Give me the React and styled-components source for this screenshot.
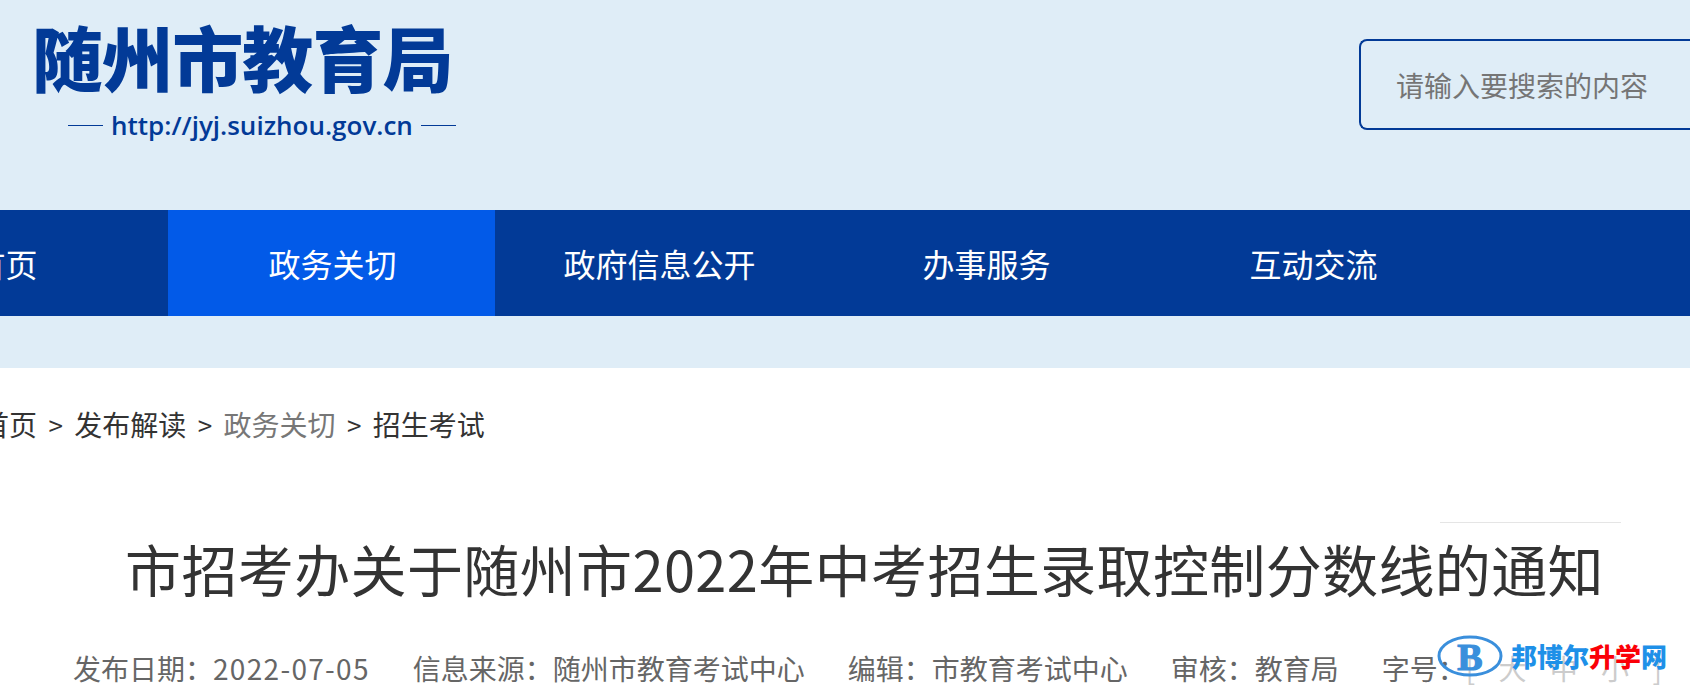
import styled, { createGlobalStyle } from "styled-components";

const GlobalStyle = createGlobalStyle`
  html, body {
    margin: 0;
    padding: 0;
    height: 698px;
    overflow: hidden;
    background: #fff;
  }
  * { box-sizing: border-box; }
`;

const CJK = `"Noto Sans CJK SC", "Noto Sans", sans-serif`;

const Page = styled.div`
  position: relative;
  width: 1690px;
  height: 698px;
  overflow: hidden;
  font-family: ${CJK};
`;

const HeaderBand = styled.header`
  height: 368px;
  background: #dfedf7;
`;

const TopRow = styled.div`
  height: 210px;
  display: flex;
  justify-content: space-between;
  align-items: flex-start;
`;

const Logo = styled.div`
  padding: 9px 0 0 32px;
  display: flex;
  flex-direction: column;
`;

const LogoTitle = styled.div`
  font-size: 71px;
  line-height: 92px;
  font-weight: 900;
  color: #023a97;
  letter-spacing: -0.9px;
  white-space: nowrap;
`;

const LogoUrl = styled.div`
  display: flex;
  align-items: center;
  gap: 8px;
  margin: 8px 0 0 36px;
  font-family: "Open Sans", sans-serif;
  font-size: 26px;
  line-height: 32px;
  font-weight: 600;
  color: #023a97;
  &::before, &::after {
    content: "";
    width: 35px;
    height: 1px;
    background: #023a97;
  }
`;

const SearchBox = styled.div`
  width: 331px;
  height: 91px;
  margin-top: 39px;
  padding-left: 35px;
  display: flex;
  align-items: center;
  flex-shrink: 0;
  border: 2px solid #023a97;
  border-right: none;
  border-radius: 8px 0 0 8px;
  font-size: 28px;
  color: #757575;
`;

const Nav = styled.nav`
  height: 106px;
  background: #023a97;
  display: flex;
  margin-left: -159px;
`;

const NavItem = styled.a`
  flex: 0 0 327px;
  display: flex;
  align-items: center;
  justify-content: center;
  padding-left: 2px;
  font-size: 32px;
  color: #fff;
  background: ${(p) => (p.$active ? "#025ae8" : "transparent")};
`;

const Crumbs = styled.div`
  display: flex;
  align-items: center;
  height: 40px;
  margin: 36px 0 0 -19px;
  font-size: 28px;
  color: #333;
  white-space: nowrap;
`;

const CrumbSep = styled.span`
  margin: 0 11.4px;
  font-size: 26px;
`;

const CrumbLink = styled.span`
  color: ${(p) => (p.$muted ? "#777" : "#333")};
`;

const Rule = styled.div`
  width: 181px;
  height: 1px;
  margin: 78px 0 0 1440px;
  background: #e5e5e5;
`;

const Title = styled.h1`
  margin: 7px 0 0;
  padding-left: 125px;
  font-size: 56px;
  line-height: 76px;
  font-weight: 400;
  letter-spacing: 0.38px;
  color: #333;
  white-space: nowrap;
`;

const Meta = styled.div`
  display: flex;
  gap: 43px;
  margin: 42px 0 0 73px;
  font-size: 28px;
  line-height: 40px;
  color: #666;
  white-space: nowrap;
`;

const MetaDate = styled.span`
  letter-spacing: 1.3px;
`;

const FontSizes = styled.span`
  color: #ccc;
  word-spacing: 17px;
`;

// transparent logo laid over the meta row, the text shows through the oval
const Watermark = styled.div`
  position: absolute;
  left: 1437px;
  top: 635px;
  display: flex;
  align-items: center;
  gap: 8px;
`;

const WatermarkText = styled.div`
  display: flex;
  font-size: 26px;
  font-weight: 900;
  line-height: 30px;
  color: #1e90e8;
`;

const WatermarkRed = styled.span`
  color: #fb0007;
`;

function BadgeIcon() {
  return (
    <svg width="66" height="42" viewBox="0 0 66 42">
      <ellipse cx="33" cy="21" rx="31" ry="19" fill="none" stroke="#3a8fdc" strokeWidth="3" />
      <text x="33" y="35" textAnchor="middle" fontFamily="'Liberation Serif', serif" fontWeight="700" fontSize="38" fill="#3a8fdc" stroke="#3a8fdc" strokeWidth="1.2">B</text>
    </svg>
  );
}

export default function App() {
  return (
    <Page>
      <GlobalStyle />
      <HeaderBand>
        <TopRow>
          <Logo>
            <LogoTitle>随州市教育局</LogoTitle>
            <LogoUrl>http://jyj.suizhou.gov.cn</LogoUrl>
          </Logo>
          <SearchBox>请输入要搜索的内容</SearchBox>
        </TopRow>
        <Nav>
          <NavItem>首页</NavItem>
          <NavItem $active>政务关切</NavItem>
          <NavItem>政府信息公开</NavItem>
          <NavItem>办事服务</NavItem>
          <NavItem>互动交流</NavItem>
        </Nav>
      </HeaderBand>
      <Crumbs>
        <CrumbLink>首页</CrumbLink>
        <CrumbSep>&gt;</CrumbSep>
        <CrumbLink>发布解读</CrumbLink>
        <CrumbSep>&gt;</CrumbSep>
        <CrumbLink $muted>政务关切</CrumbLink>
        <CrumbSep>&gt;</CrumbSep>
        <CrumbLink>招生考试</CrumbLink>
      </Crumbs>
      <Rule />
      <Title>市招考办关于随州市2022年中考招生录取控制分数线的通知</Title>
      <Meta>
        <span>发布日期：<MetaDate>2022-07-05</MetaDate></span>
        <span>信息来源：随州市教育考试中心</span>
        <span>编辑：市教育考试中心</span>
        <span>审核：教育局</span>
        <span>字号：<FontSizes>[ 大 中 小 ]</FontSizes></span>
      </Meta>
      <Watermark>
        <BadgeIcon />
        <WatermarkText>
          邦博尔<WatermarkRed>升学</WatermarkRed>网
        </WatermarkText>
      </Watermark>
    </Page>
  );
}
